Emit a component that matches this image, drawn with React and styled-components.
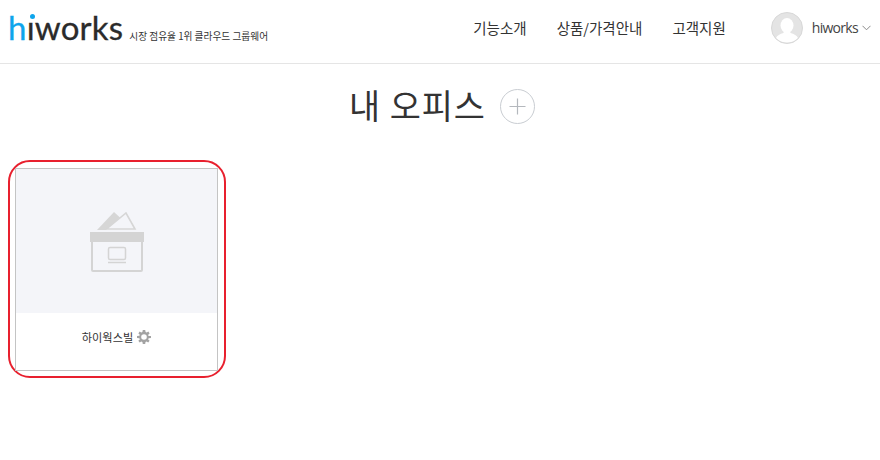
import React from 'react';
import styled, { createGlobalStyle } from 'styled-components';

const GlobalStyle = createGlobalStyle`
  html, body {
    margin: 0;
    padding: 0;
    background: #fff;
    font-family: "Noto Sans CJK KR", "Noto Sans", sans-serif;
    color: #333;
  }
`;

const Header = styled.header`
  height: 63px;
  border-bottom: 1px solid #e5e5e5;
  display: flex;
  align-items: center;
  justify-content: space-between;
  padding: 0 9px 0 8px;
`;

const Brand = styled.div`
  display: flex;
  align-items: flex-end;
  gap: 6px;
  margin-top: -9px;
`;

const Logo = styled.div`
  font-family: Lato, "Open Sans", sans-serif;
  font-size: 33px;
  line-height: 34px;
  font-weight: 400;
  color: #2b2b2b;
  letter-spacing: 0.2px;
  -webkit-text-stroke: 0.3px currentColor;
`;

const LogoBlue = styled.span`
  color: #0ea5ec;
`;

const LogoI = styled.span`
  position: relative;
  &::before {
    content: '';
    position: absolute;
    left: 3px;
    top: 7px;
    width: 5px;
    height: 5px;
    border-radius: 50%;
    background: #0ea5ec;
  }
`;

const Slogan = styled.span`
  font-size: 9.7px;
  line-height: 14px;
  color: #333;
  margin-bottom: 1px;
`;

const Right = styled.div`
  display: flex;
  align-items: center;
`;

const Nav = styled.nav`
  display: flex;
  gap: 30px;
  margin-right: 45px;
  margin-top: -8px;
`;

const NavItem = styled.a`
  font-size: 14.5px;
  line-height: 20px;
  color: #333;
`;

const User = styled.div`
  display: flex;
  align-items: center;
  gap: 9px;
  margin-top: -7px;
`;

const Avatar = styled.div`
  width: 32px;
  height: 32px;
  border-radius: 50%;
  overflow: hidden;
  border: 1px solid #d8d8d8;
  box-sizing: border-box;
  background: #e4e4e4;
`;

const UserName = styled.span`
  font-family: "Open Sans", sans-serif;
  font-size: 14px;
  letter-spacing: -0.7px;
  color: #444;
  display: flex;
  align-items: center;
  gap: 4px;
  margin-top: -1px;
`;

const TitleRow = styled.div`
  display: flex;
  justify-content: center;
  align-items: center;
  gap: 14px;
  height: 84px;
  margin-top: 1px;
  padding-left: 4px;
  padding-bottom: 4px;
  box-sizing: border-box;
`;

const Title = styled.h1`
  margin: 0;
  font-size: 33.8px;
  line-height: 44px;
  font-weight: 400;
  color: #333;
  letter-spacing: 1px;
`;

const AddButton = styled.button`
  width: 35px;
  height: 35px;
  margin-top: 2px;
  border-radius: 50%;
  border: 1px solid #c9cdd2;
  background: #fff;
  padding: 0;
  display: flex;
  align-items: center;
  justify-content: center;
`;

const Grid = styled.div`
  display: flex;
  padding: 11px 0 0 8px;
`;

const Highlight = styled.div`
  width: 218px;
  height: 218px;
  box-sizing: border-box;
  border: 2px solid #e8202e;
  border-radius: 22px;
  padding: 6px 6px 5px 5px;
`;

const Card = styled.div`
  height: 100%;
  box-sizing: border-box;
  border: 1px solid #c4c4c4;
  display: flex;
  flex-direction: column;
`;

const Thumb = styled.div`
  height: 144px;
  box-sizing: border-box;
  padding-top: 2px;
  background: #f4f5f9;
  display: flex;
  align-items: center;
  justify-content: center;
`;

const CardFooter = styled.div`
  flex: 1;
  display: flex;
  align-items: center;
  justify-content: center;
  gap: 4px;
  padding-bottom: 11px;
  padding-top: 1px;
  font-size: 11.2px;
  color: #333;
`;

const ChevronIcon = () => (
  <svg width="9" height="6" viewBox="0 0 9 6" fill="none" stroke="#8a8a8a" strokeWidth="1">
    <path d="M0.5 0.8 L4.5 4.8 L8.5 0.8" />
  </svg>
);

const AvatarIcon = () => (
  <svg width="30" height="30" viewBox="0 0 30 30">
    <ellipse cx="15" cy="12.5" rx="6.5" ry="7.5" fill="#fff" />
    <path d="M12 17 L18 17 L18.5 20 C22 21 25 22.5 26 25 C23 28 19 29.5 15 29.5 C11 29.5 7 28 4 25 C5 22.5 8 21 11.5 20 Z" fill="#fff" />
  </svg>
);

const PlusIcon = () => (
  <svg width="17" height="17" viewBox="0 0 17 17" stroke="#b4b8bd" strokeWidth="1.2">
    <path d="M8.5 0.5 V16.5 M0.5 8.5 H16.5" />
  </svg>
);

const OfficeIcon = () => (
  <svg width="54" height="60" viewBox="0 0 54 60" fill="none">
    <path d="M7 18 L24 0 L30 5.5 L16 18 Z" fill="#d6d6d6" />
    <path d="M16.5 17 L36 1 L45 17 Z" stroke="#d6d6d6" strokeWidth="1.6" />
    <rect x="0" y="20" width="54" height="10" fill="#d4d4d4" />
    <path d="M2 30 V58 Q2 59 3 59 H51 Q52 59 52 58 V30" stroke="#d4d4d4" strokeWidth="2" />
    <rect x="18.5" y="35.5" width="17" height="12" rx="1.5" stroke="#d4d4d4" strokeWidth="1.5" />
    <path d="M18 50.5 H36" stroke="#d4d4d4" strokeWidth="1.5" />
  </svg>
);

const GearIcon = () => (
  <svg width="14" height="14" viewBox="0 0 14 14">
    <path
      fill="#a3a3a3"
      fillRule="evenodd"
      d="M5.8 0 H8.2 L8.6 2 L9.7 2.5 L11.4 1.4 L12.6 3.4 L11.2 4.7 L11.5 5.9 L14 6 V8 L11.6 8.3 L11.2 9.4 L12.6 10.7 L11.2 12.6 L9.6 11.5 L8.5 12 L8.2 14 H5.8 L5.4 12 L4.3 11.5 L2.7 12.6 L1.3 10.7 L2.8 9.4 L2.4 8.3 L0 8 V6 L2.4 5.8 L2.8 4.7 L1.4 3.4 L2.6 1.4 L4.3 2.5 L5.4 2 Z M7 4.2 A2.8 2.8 0 1 0 7 9.8 A2.8 2.8 0 1 0 7 4.2 Z"
    />
  </svg>
);

const navItems = ['기능소개', '상품/가격안내', '고객지원'];

export default function App() {
  return (
    <>
      <GlobalStyle />
      <Header>
        <Brand>
          <Logo>
            <LogoBlue>h</LogoBlue>
            <LogoI>ı</LogoI>works
          </Logo>
          <Slogan>시장 점유율 1위 클라우드 그룹웨어</Slogan>
        </Brand>
        <Right>
          <Nav>
            {navItems.map(item => (
              <NavItem key={item}>{item}</NavItem>
            ))}
          </Nav>
          <User>
            <Avatar>
              <AvatarIcon />
            </Avatar>
            <UserName>
              hiworks
              <ChevronIcon />
            </UserName>
          </User>
        </Right>
      </Header>
      <TitleRow>
        <Title>내 오피스</Title>
        <AddButton>
          <PlusIcon />
        </AddButton>
      </TitleRow>
      <Grid>
        <Highlight>
          <Card>
            <Thumb>
              <OfficeIcon />
            </Thumb>
            <CardFooter>
              하이웍스빌
              <GearIcon />
            </CardFooter>
          </Card>
        </Highlight>
      </Grid>
    </>
  );
}
